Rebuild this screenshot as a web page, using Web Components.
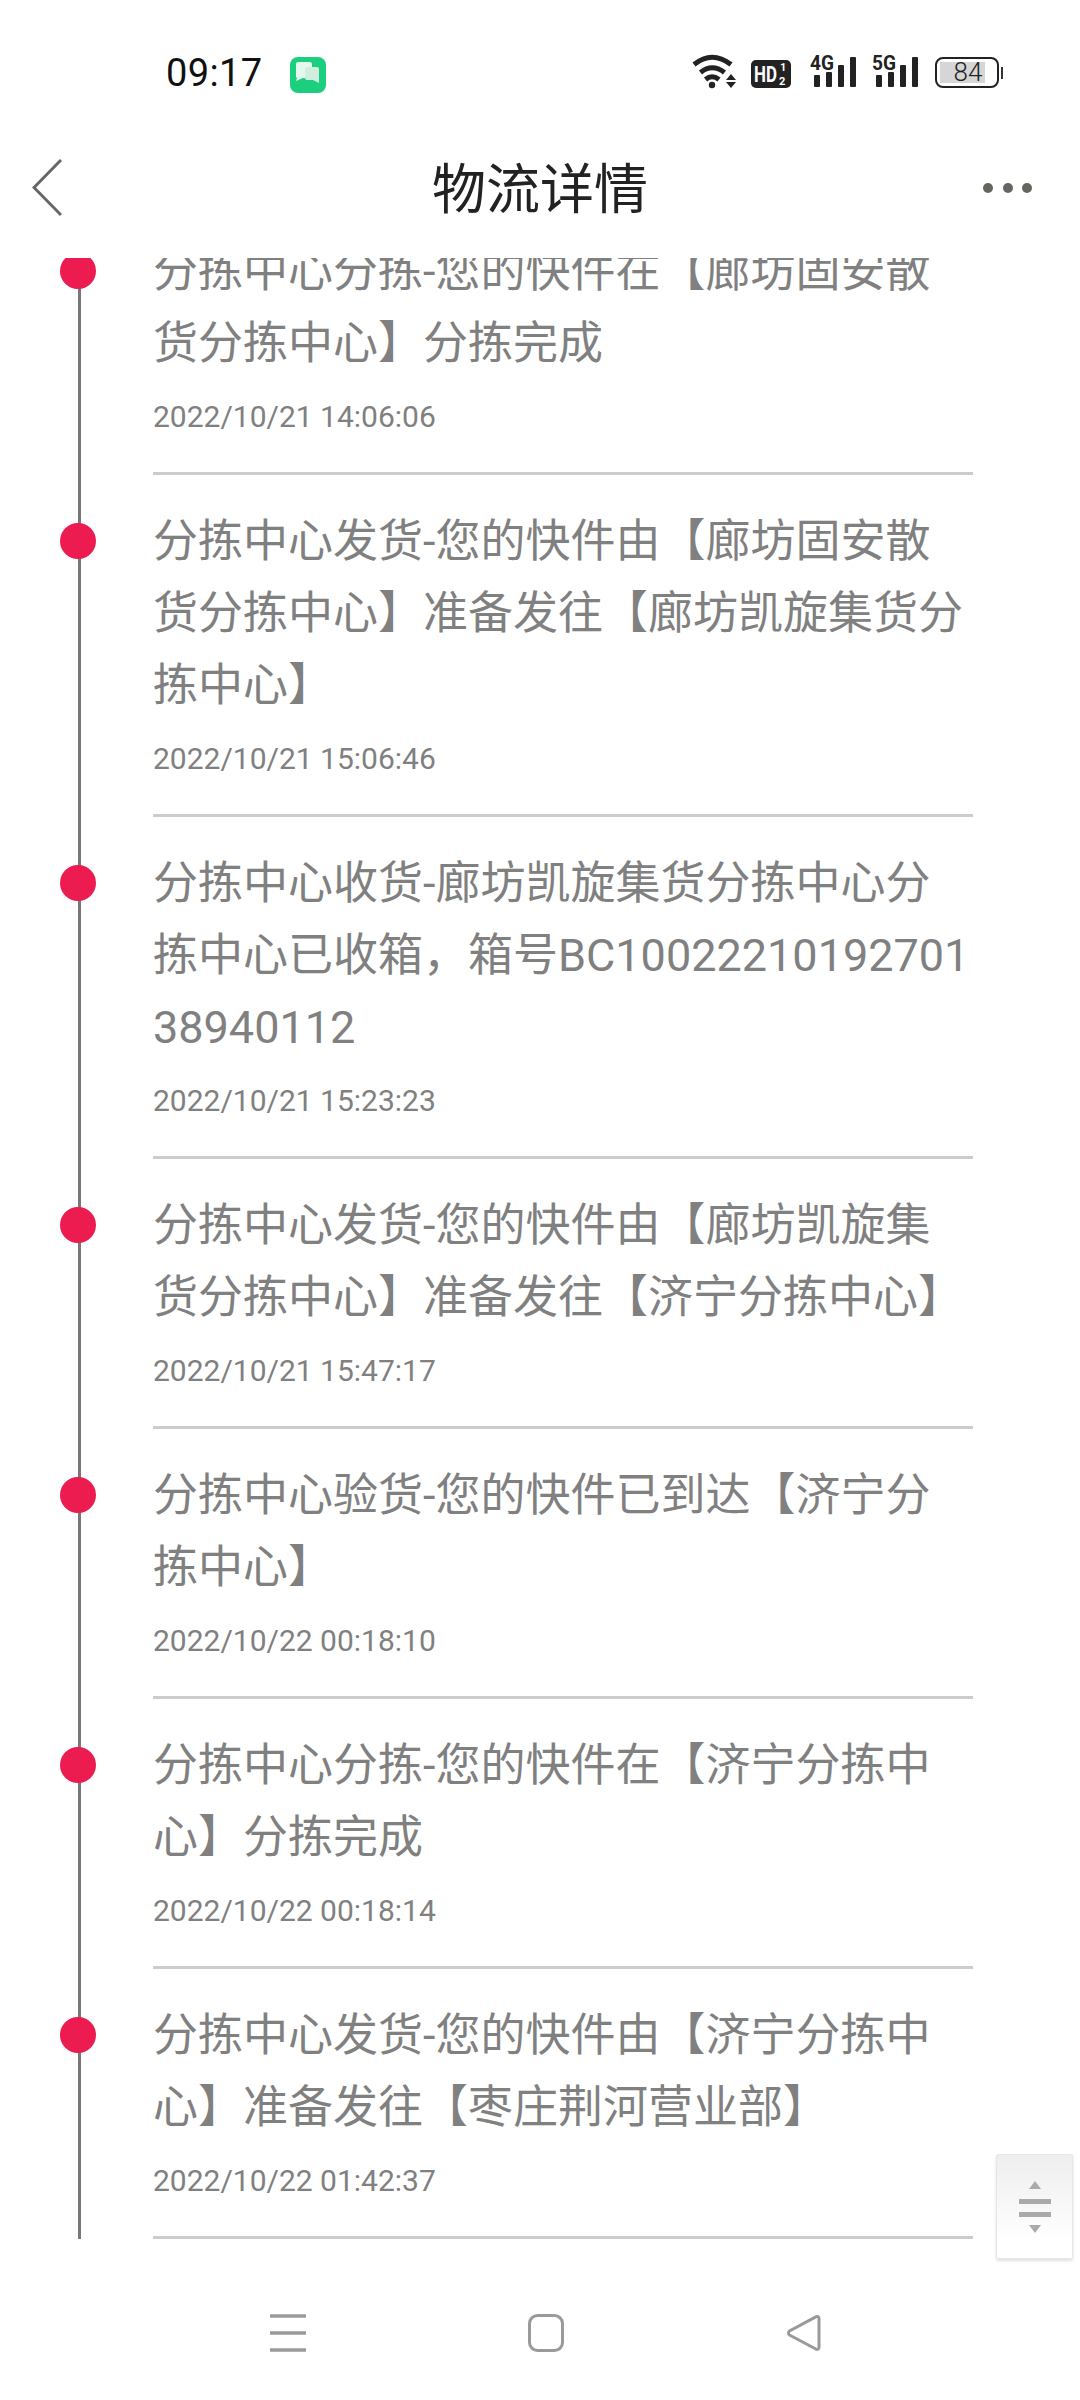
<!DOCTYPE html>
<html lang="zh-CN">
<head>
<meta charset="utf-8">
<title>物流详情</title>
<style>
    html, body{
        margin:0;
        padding:0;
        background:#fff;
        font-family: Roboto, "Noto Sans CJK SC", sans-serif;
    }
</style>
</head>
<body>
<phone-page>
    <status-bar slot="top" time="09:17"></status-bar>
    <page-header slot="top">物流详情</page-header>

    <track-list>
        <track-item date="2022/10/21 14:06:06">分拣中心分拣-您的快件在【廊坊固安散货分拣中心】分拣完成</track-item>
        <track-item date="2022/10/21 15:06:46">分拣中心发货-您的快件由【廊坊固安散货分拣中心】准备发往【廊坊凯旋集货分拣中心】</track-item>
        <track-item date="2022/10/21 15:23:23">分拣中心收货-廊坊凯旋集货分拣中心分拣中心已收箱，箱号BC1002221019270138940112</track-item>
        <track-item date="2022/10/21 15:47:17">分拣中心发货-您的快件由【廊坊凯旋集货分拣中心】准备发往【济宁分拣中心】</track-item>
        <track-item date="2022/10/22 00:18:10">分拣中心验货-您的快件已到达【济宁分拣中心】</track-item>
        <track-item date="2022/10/22 00:18:14">分拣中心分拣-您的快件在【济宁分拣中心】分拣完成</track-item>
        <track-item date="2022/10/22 01:42:37">分拣中心发货-您的快件由【济宁分拣中心】准备发往【枣庄荆河营业部】</track-item>
    </track-list>

    <nav-bar></nav-bar>
    <scroll-handle slot="over"></scroll-handle>
</phone-page>

<script>
class PhonePage extends HTMLElement {
    constructor(){
        super();
        this.attachShadow({mode:'open'});
    }
    connectedCallback(){
        this.shadowRoot.innerHTML = `
        <style>
            :host{
                display:flex;
                flex-direction:column;
                position:relative;
                width:1080px;
                height:2400px;
                overflow:hidden;
                background:#fff;
            }
        </style>
        <slot name="top"></slot>
        <slot></slot>
        <slot name="over"></slot>
        `;
    }
}

class SignalIcon extends HTMLElement {
    constructor(){
        super();
        this.attachShadow({mode:'open'});
    }
    connectedCallback(){
        const label = this.getAttribute('label') ?? '4G';
        this.shadowRoot.innerHTML = `
        <style>
            :host{ display:block; width:47px; height:34px; }
            svg{ display:block; overflow:visible; }
            text{ font-family:Roboto, sans-serif; font-weight:700; font-size:21px; fill:#222; }
            rect{ fill:#222; }
        </style>
        <svg width="47" height="34" viewBox="0 0 47 34">
            <text x="0" y="16" textLength="24" lengthAdjust="spacingAndGlyphs">${label}</text>
            <rect x="4" y="21" width="6" height="12" rx="1"/>
            <rect x="16" y="18" width="6" height="15" rx="1"/>
            <rect x="28" y="11" width="6" height="22" rx="1"/>
            <rect x="40" y="3" width="6" height="30" rx="1"/>
        </svg>
        `;
    }
}

class BatteryIcon extends HTMLElement {
    constructor(){
        super();
        this.attachShadow({mode:'open'});
    }
    connectedCallback(){
        this.shadowRoot.innerHTML = `
        <style>
            :host{ display:flex; align-items:center; gap:2px; }
            .body{
                box-sizing:border-box;
                width:64px;
                height:31px;
                padding:3px;
                border:2px solid #222;
                border-radius:8px;
            }
            .level{
                width:45px;
                height:21px;
                background:#d6d6d6;
                font:300 26px/21px Roboto, sans-serif;
                color:#222;
                text-align:center;
            }
            .level span{ display:block; width:56px; }
            .nub{ width:2px; height:12px; background:#333; }
        </style>
        <div class="body"><div class="level"><span>${this.getAttribute('level') ?? ''}</span></div></div>
        <div class="nub"></div>
        `;
    }
}

class StatusBar extends HTMLElement {
    constructor(){
        super();
        this.attachShadow({mode:'open'});
    }
    connectedCallback(){
        this.shadowRoot.innerHTML = `
        <style>
            :host{
                display:flex;
                box-sizing:border-box;
                height:130px;
                padding:54px 77px 0 166px;
                align-items:flex-start;
            }
            .time{
                font:400 38px/36px Roboto, sans-serif;
                letter-spacing:.4px;
                color:#111;
                width:124px;
                margin-top:1px;
            }
            svg{ display:block; overflow:visible; }
            .right{
                margin-left:auto;
                display:flex;
                align-items:flex-start;
            }
            .hd text{ font-family:Roboto, sans-serif; font-weight:700; fill:#fff; }
        </style>
        <div class="time">${this.getAttribute('time')}</div>
        <svg width="36" height="36" viewBox="0 0 36 36" style="margin-top:3px">
            <rect width="36" height="36" rx="8" fill="#1ccf7e"/>
            <path d="M8 5h12a2 2 0 0 1 2 2v12a2 2 0 0 1-2 2h-7l-7 3 1-3a2 2 0 0 1-1-2V7a2 2 0 0 1 2-2z" fill="#e4f8ee"/>
            <path d="M17 10h10a2 2 0 0 1 2 2v14l-6-3h-6a2 2 0 0 1-2-2v-9a2 2 0 0 1 2-2z" fill="#cfeedd"/>
        </svg>
        <div class="right">
            <svg width="46" height="36" viewBox="693 53 46 36">
                <g fill="none" stroke="#222" stroke-width="5">
                    <path d="M695 63.5Q713 49 732 63.5"/>
                    <path d="M701.500 71.500Q713 62 725.500 71.500"/>
                    <path d="M706.500 78.500Q713 73 720 78.500"/>
                </g>
                <circle cx="713" cy="84" r="3.200" fill="#222"/>
                <path d="M732 73l5 6h-10zM727 81h10l-5 6z" fill="#222"/>
            </svg>
            <svg class="hd" width="40" height="28" viewBox="0 0 40 28" style="margin:6px 0 0 13px">
                <rect width="40" height="28" rx="5" fill="#222"/>
                <text transform="translate(3 22) scale(.77 1)" font-size="22">HD</text>
                <text x="29" y="11" font-size="11">1</text>
                <text x="28" y="25" font-size="11">2</text>
            </svg>
            <signal-icon label="4G" style="margin:0 0 0 19px"></signal-icon>
            <signal-icon label="5G" style="margin:0 0 0 15px"></signal-icon>
            <battery-icon level="84" style="margin:3px 0 0 16px"></battery-icon>
        </div>
        `;
    }
}

class PageHeader extends HTMLElement {
    constructor(){
        super();
        this.attachShadow({mode:'open'});
    }
    connectedCallback(){
        this.shadowRoot.innerHTML = `
        <style>
            :host{
                display:grid;
                grid-template-columns:1fr auto 1fr;
                align-items:center;
                box-sizing:border-box;
                height:128px;
                padding:0 0 12px 0;
            }
            h1{
                margin:6px 0 0;
                font:400 54px/72px Roboto, "Noto Sans CJK SC", sans-serif;
                color:#222;
            }
            svg{ display:block; }
            .back{ margin-left:32px; }
            .more{ justify-self:end; margin-right:47px; }
        </style>
        <svg class="back" width="30" height="58" viewBox="0 0 30 58">
            <path d="M29 1L2 28.500L29 56" fill="none" stroke="#666" stroke-width="3"/>
        </svg>
        <h1><slot></slot></h1>
        <svg class="more" width="50" height="10" viewBox="0 0 50 10">
            <circle cx="5" cy="5" r="5" fill="#666660"/>
            <circle cx="25" cy="5" r="5" fill="#666660"/>
            <circle cx="44" cy="5" r="5" fill="#666660"/>
        </svg>
        `;
    }
}

class TrackList extends HTMLElement {
    constructor(){
        super();
        this.attachShadow({mode:'open'});
    }
    connectedCallback(){
        this.shadowRoot.innerHTML = `
        <style>
            :host{
                display:block;
                height:1981px;
                overflow:hidden;
            }
            /* the list is scrolled a little, the first row is cut by the header */
            .inner{ margin-top:-53px; }
        </style>
        <div class="inner"><slot></slot></div>
        `;
    }
}

class TrackItem extends HTMLElement {
    constructor(){
        super();
        this.attachShadow({mode:'open'});
    }
    connectedCallback(){
        this.shadowRoot.innerHTML = `
        <style>
            :host{
                display:grid;
                grid-template-columns:153px 820px;
            }
            .rail{
                background:linear-gradient(#777,#777) no-repeat 78px 0 / 3px 100%;
            }
            .dot{
                width:36px;
                height:36px;
                margin:48px 0 0 60px;
                border-radius:50%;
                background:#ec1c50;
            }
            .content{
                box-sizing:border-box;
                height:100%;
                padding:31px 0 35px;
                border-bottom:3px solid #ccc;
            }
            .text{
                font-size:45px;
                line-height:72px;
                color:#808080;
                word-break:break-all;
            }
            .date{
                margin-top:17px;
                font-size:30px;
                line-height:40px;
                color:#808080;
            }
        </style>
        <div class="rail"><div class="dot"></div></div>
        <div class="content">
            <div class="text"><slot></slot></div>
            <div class="date">${this.getAttribute('date')}</div>
        </div>
        `;
    }
}

class NavBar extends HTMLElement {
    constructor(){
        super();
        this.attachShadow({mode:'open'});
    }
    connectedCallback(){
        this.shadowRoot.innerHTML = `
        <style>
            :host{
                display:flex;
                box-sizing:border-box;
                height:161px;
                padding:75px 0 0 270px;
                gap:222px;
                align-items:flex-start;
            }
            svg{ display:block; }
        </style>
        <svg width="36" height="38" viewBox="0 0 36 38">
            <path d="M0 2h36M0 19h36M0 36h36" stroke="#9a9a9a" stroke-width="3.500" fill="none"/>
        </svg>
        <svg width="36" height="38" viewBox="0 0 36 38">
            <rect x="1.500" y="1.500" width="33" height="35" rx="8" fill="none" stroke="#9a9a9a" stroke-width="3"/>
        </svg>
        <svg width="36" height="38" viewBox="0 0 36 38">
            <path d="M33 4.500a2 2 0 0 0-3.200-1.600L3.500 17a2.500 2.500 0 0 0 0 4l26.300 14a2 2 0 0 0 3.200-1.600z" fill="none" stroke="#9a9a9a" stroke-width="3"/>
        </svg>
        `;
    }
}

class ScrollHandle extends HTMLElement {
    constructor(){
        super();
        this.attachShadow({mode:'open'});
    }
    connectedCallback(){
        this.shadowRoot.innerHTML = `
        <style>
            :host{
                position:absolute;
                left:996px;
                top:2154px;
                width:77px;
                height:105px;
                box-sizing:border-box;
                border:1px solid #e6e6e6;
                border-radius:2px;
                background:linear-gradient(#eeeeee,#ffffff 85%);
                box-shadow:0 2px 3px rgba(0,0,0,.12);
                display:flex;
                align-items:center;
                justify-content:center;
            }
            svg{ display:block; }
        </style>
        <svg width="32" height="52" viewBox="0 0 32 52">
            <path d="M16 0l6 8H10zM10 44h12l-6 8z" fill="#aaa"/>
            <rect x="0" y="18" width="32" height="5" fill="#aaa"/>
            <rect x="0" y="31" width="32" height="5" fill="#aaa"/>
        </svg>
        `;
    }
}

customElements.define('phone-page', PhonePage);
customElements.define('signal-icon', SignalIcon);
customElements.define('battery-icon', BatteryIcon);
customElements.define('status-bar', StatusBar);
customElements.define('page-header', PageHeader);
customElements.define('track-list', TrackList);
customElements.define('track-item', TrackItem);
customElements.define('nav-bar', NavBar);
customElements.define('scroll-handle', ScrollHandle);
</script>
</body>
</html>
